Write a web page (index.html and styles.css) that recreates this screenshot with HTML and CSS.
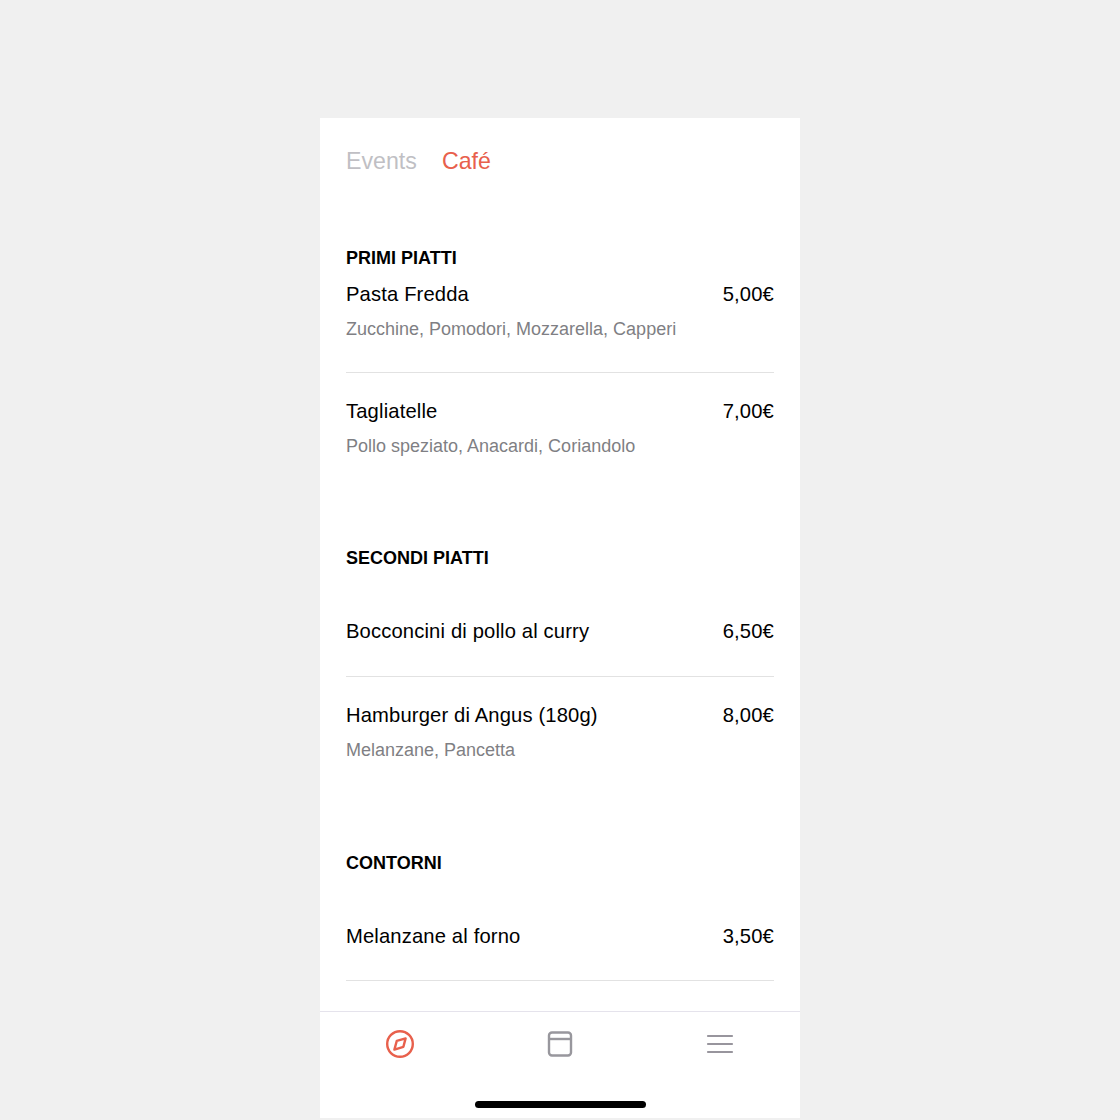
FILE: index.html
```html
<!DOCTYPE html>
<html lang="en">
<head>
  <meta charset="UTF-8" />
  <meta name="viewport" content="width=device-width, initial-scale=1.0"/>
  <title>Café</title>
  <link rel="stylesheet" href="styles.css">
</head>
<body>
  <div class="phone">
    <div class="tabs">
      <span class="tab">Events</span>
      <span class="tab active">Café</span>
    </div>

    <div class="menu">
      <div class="section first">
        <h2>PRIMI PIATTI</h2>
        <div class="item">
          <div class="row"><span>Pasta Fredda</span><span>5,00€</span></div>
          <div class="desc">Zucchine, Pomodori, Mozzarella, Capperi</div>
        </div>
        <div class="item">
          <div class="row"><span>Tagliatelle</span><span>7,00€</span></div>
          <div class="desc">Pollo speziato, Anacardi, Coriandolo</div>
        </div>
      </div>

      <div class="section">
        <h2>SECONDI PIATTI</h2>
        <div class="item">
          <div class="row"><span>Bocconcini di pollo al curry</span><span>6,50€</span></div>
        </div>
        <div class="item">
          <div class="row"><span>Hamburger di Angus (180g)</span><span>8,00€</span></div>
          <div class="desc">Melanzane, Pancetta</div>
        </div>
      </div>

      <div class="section">
        <h2>CONTORNI</h2>
        <div class="item">
          <div class="row"><span>Melanzane al forno</span><span>3,50€</span></div>
        </div>
      </div>
    </div>

    <div class="tabbar">
      <div class="icons">
        <svg class="icon" viewBox="0 0 30 30" fill="none" stroke="#e8604c" stroke-width="2.4">
          <circle cx="15" cy="15" r="12.8"/>
          <path d="M20.6 9.4 L18.4 17.8 L9.4 20.6 L11.8 11.8 Z" stroke-width="2.4" stroke-linejoin="round"/>
        </svg>
        <svg class="icon" viewBox="0 0 30 30" fill="none" stroke="#98979d" stroke-width="2.4">
          <rect x="4" y="3.5" width="22" height="23" rx="3"/>
          <path d="M4 10 H26"/>
        </svg>
        <svg class="icon" viewBox="0 0 30 30" fill="none" stroke="#98959d" stroke-width="2.2" stroke-linecap="round">
          <path d="M3 7 H27 M3 15 H27 M3 23 H27"/>
        </svg>
      </div>
      <div class="home-bar"></div>
    </div>
  </div>
</body>
</html>
```

FILE: styles.css
```css
body {
  font-family: 'Liberation Sans', sans-serif;
  background-color: #f0f0f0;
  color: #000;
  margin: 0;
}

.phone {
  width: 480px;
  height: 1000px;
  margin: 118px auto 2px;
  background-color: #fff;
  display: flex;
  flex-direction: column;
}

.tabs {
  display: flex;
  gap: 25px;
  padding: 28px 26px 0;
  font-size: 23.2px;
  line-height: 30px;
}

.tab {
  color: #c0bfc4;
}

.tab.active {
  color: #e8604c;
}

.menu {
  flex: 1;
  overflow: hidden;
  padding: 0 26px;
}

.section {
  margin-top: 59px;
}

.section.first {
  margin-top: 72px;
}

.section:last-child {
  margin-top: 60px;
}

h2 {
  margin: 0;
  font-size: 18px;
  line-height: 20px;
  font-weight: 700;
}

.item {
  padding: 26px 0 33px;
  border-bottom: 1px solid #e2e2e2;
}

.item:first-of-type {
  padding-top: 51px;
}

.first .item:first-of-type {
  padding-top: 14px;
}

.item:last-child {
  border-bottom: none;
}

.section:last-child .item {
  padding-bottom: 32px;
  border-bottom: 1px solid #e2e2e2;
}

.row {
  display: flex;
  justify-content: space-between;
  font-size: 20.2px;
  line-height: 24px;
  letter-spacing: 0.15px;
}

.desc {
  margin: 13px 0 -1px;
  font-size: 18px;
  line-height: 21px;
  color: #7f7f84;
}

.tabbar {
  height: 106px;
  border-top: 1px solid #e5e3ec;
  display: flex;
  flex-direction: column;
  align-items: center;
}

.icons {
  display: grid;
  grid-template-columns: repeat(3, 1fr);
  justify-items: center;
  width: 100%;
  padding-top: 17px;
}

.icon {
  width: 30px;
  height: 30px;
  display: block;
}

.home-bar {
  width: 171px;
  height: 7px;
  margin-top: 42px;
  border-radius: 3.5px;
  background-color: #000;
}
```
